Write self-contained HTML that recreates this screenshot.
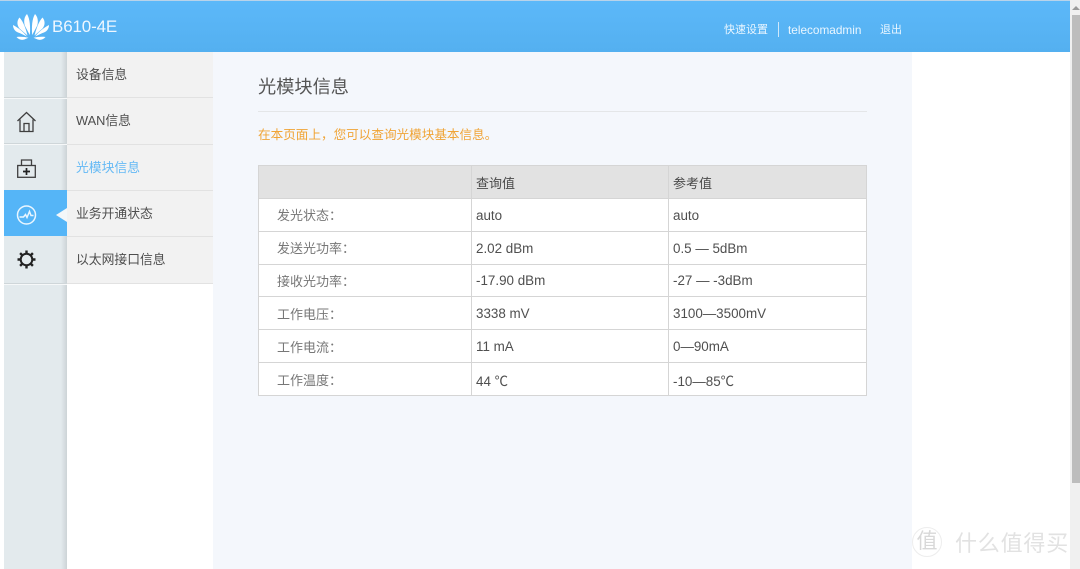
<!DOCTYPE html>
<html lang="zh">
<head>
<meta charset="utf-8">
<title>光模块信息</title>
<style>
html,body{margin:0;padding:0;width:1080px;height:569px;overflow:hidden;background:#fff;}
body{position:relative;font-family:"Liberation Sans","Noto Sans CJK SC",sans-serif;font-size:13px;color:#4a4a4a;}
.a{position:absolute;white-space:nowrap;}
.hdr{left:0;top:1px;width:1070px;height:51px;background:linear-gradient(#5cb8f9,#54b0f0);}
.top{left:0;top:0;width:1070px;height:1px;background:#b9d3ea;}
.hl{color:#eaf6ff;font-size:11px;line-height:16px;}
.side{left:4px;top:52px;width:63px;height:517px;background:#e3eaed;}
.shadow{left:61px;top:52px;width:6px;height:517px;background:linear-gradient(90deg,rgba(190,198,202,0),rgba(185,192,196,.55));}
.sl{left:4px;width:63px;height:1px;background:#cfd6d9;border-bottom:1px solid #f6f8f9;}
.sub{left:67px;top:52px;width:146px;height:231px;background:#f2f2f2;}
.sd{left:67px;width:146px;height:1px;background:#e2e2e2;}
.m{left:76px;font-size:12.8px;line-height:18px;color:#4d4d4d;}
.main{left:213px;top:52px;width:699px;height:517px;background:#f4f7fc;}
.title{left:258px;top:75px;font-size:18.200px;line-height:24px;color:#555;}
.rule{left:258px;top:111px;width:609px;height:1px;background:#e4e6e8;}
.tip{left:258px;top:126px;font-size:12.600px;line-height:18px;color:#f0a436;}
table{position:absolute;left:258px;top:165px;width:608px;height:231px;border-collapse:collapse;table-layout:fixed;background:#fff;font-size:13px;color:#4f4f4f;}
td,th{border:1px solid #d5d5d5;padding:1px 0 0 4px;height:32px;text-align:left;font-weight:normal;box-sizing:border-box;}
th{background:#e2e2e2;color:#4a4a4a;}
td.l{padding-left:18px;padding-top:0;color:#777;}
td.v{font-size:13.400px;}
.sb{left:1070px;top:0;width:10px;height:569px;background:#f0f0f0;}
.th{left:1072px;top:15px;width:8px;height:468px;background:#bdbdbd;}
.wm{left:955px;top:530px;font-size:22px;line-height:28px;color:#e2e2e2;letter-spacing:.8px;}
.wc{left:912px;top:527px;width:30px;height:30px;border-radius:50%;border:1px solid #ededed;box-sizing:border-box;font-size:21px;line-height:27px;text-align:center;color:#d8d8d8;}
</style>
</head>
<body>
<div class="a top"></div>
<div class="a hdr"></div>
<svg class="a" style="left:12px;top:13px" width="38" height="28" viewBox="0 0 38 28">
<g fill="#fff">
<path d="M15 1C12 4 11.500 9 13 13L17.800 22C18.500 14 18 6 15 1Z"/>
<path d="M23 1C26 4 26.500 9 25 13L20.200 22C19.500 14 20 6 23 1Z"/>
<path d="M7.500 4.500C4.500 8 5 12.500 7.500 15.500L15.500 22.500C13.500 15 11.500 9 7.500 4.500Z"/>
<path d="M30.500 4.500C33.500 8 33 12.500 30.500 15.500L22.500 22.500C24.500 15 26.500 9 30.500 4.500Z"/>
<path d="M1 12C1 16 3.500 19 7.500 20L15 23.500C11 18.500 6.500 15 1 12Z"/>
<path d="M37 12C37 16 34.500 19 30.500 20L23 23.500C27 18.500 31.500 15 37 12Z"/>
<path d="M4.500 24C7 27 10.500 27.500 13.500 26L16.500 24.800C12.500 23.800 8.500 23.500 4.500 24Z"/>
<path d="M33.500 24C31 27 27.500 27.500 24.500 26L21.500 24.800C25.500 23.800 29.500 23.500 33.500 24Z"/>
</g>
</svg>
<div class="a" style="left:52px;top:15px;font-size:17px;line-height:24px;color:#eef7ff;letter-spacing:-.15px;">B610-4E</div>
<div class="a hl" style="left:724px;top:22px">快速设置</div>
<div class="a" style="left:778px;top:22px;width:1px;height:15px;background:#cfe8fb"></div>
<div class="a hl" style="left:788px;top:22px;font-size:11.800px">telecomadmin</div>
<div class="a hl" style="left:880px;top:22px">退出</div>

<div class="a side"></div>
<div class="a shadow"></div>
<div class="a" style="left:4px;top:190px;width:63px;height:46px;background:#55b5f7"></div>
<div class="a sl" style="top:97px"></div>
<div class="a sl" style="top:143px"></div>
<div class="a sl" style="top:283px"></div>
<div class="a sub"></div>
<div class="a sd" style="top:97px"></div>
<div class="a sd" style="top:144px"></div>
<div class="a sd" style="top:190px"></div>
<div class="a sd" style="top:236px"></div>
<div class="a sd" style="top:283px"></div>
<div class="a" style="left:56px;top:208px;width:0;height:0;border-top:7px solid transparent;border-bottom:7px solid transparent;border-right:11px solid #f4f7f9"></div>

<svg class="a" style="left:16px;top:110px" width="22" height="24" viewBox="0 0 22 24" fill="none" stroke="#3f3f3f" stroke-width="1.300">
<path d="M1.500 11 10.500 2.500 19.500 11"/>
<path d="M4 9.500V21.500H17V9.500"/>
<path d="M8 21.500V13.500H13V21.500"/>
</svg>
<svg class="a" style="left:16px;top:158px" width="22" height="22" viewBox="0 0 22 22" fill="none" stroke="#3f3f3f" stroke-width="1.300">
<rect x="1.700" y="7.500" width="17.600" height="11.800"/>
<path d="M5.500 7.500V2H15.500V7.500"/>
<path d="M10.500 10V17M7 13.500H14" stroke-width="1.700" stroke="#222"/>
</svg>
<svg class="a" style="left:16px;top:204px" width="22" height="22" viewBox="0 0 22 22" fill="none" stroke="#eaf6ff" stroke-width="1.500">
<circle cx="10.500" cy="11" r="9"/>
<path d="M3.500 13H7.500L9.500 10.500 11 13.500 13.500 7.500 15 11.500H17.500" stroke-width="1.500"/>
</svg>
<svg class="a" style="left:16px;top:249px" width="22" height="22" viewBox="0 0 22 22" fill="none" stroke="#222" stroke-width="2">
<circle cx="10.500" cy="10.500" r="5.800"/>
<path d="M10.500 1.500V5M10.500 16V19.500M1.500 10.500H5M16 10.500H19.500M4.100 4.100 6.600 6.600M14.400 14.400 16.900 16.900M16.900 4.100 14.400 6.600M6.600 14.400 4.100 16.900" stroke-width="2.400"/>
</svg>

<div class="a m" style="top:66px">设备信息</div>
<div class="a m" style="top:112px">WAN信息</div>
<div class="a m" style="top:159px;color:#64b9f5">光模块信息</div>
<div class="a m" style="top:205px">业务开通状态</div>
<div class="a m" style="top:251px">以太网接口信息</div>

<div class="a main"></div>
<div class="a title">光模块信息</div>
<div class="a rule"></div>
<div class="a tip">在本页面上，您可以查询光模块基本信息。</div>
<table>
<colgroup><col style="width:213px"><col style="width:197px"><col style="width:198px"></colgroup>
<tr><th></th><th>查询值</th><th>参考值</th></tr>
<tr><td class="l">发光状态：</td><td class="v">auto</td><td class="v">auto</td></tr>
<tr><td class="l">发送光功率：</td><td class="v">2.02 dBm</td><td class="v">0.5 — 5dBm</td></tr>
<tr><td class="l">接收光功率：</td><td class="v">-17.90 dBm</td><td class="v">-27 — -3dBm</td></tr>
<tr><td class="l">工作电压：</td><td class="v">3338 mV</td><td class="v">3100—3500mV</td></tr>
<tr><td class="l">工作电流：</td><td class="v">11 mA</td><td class="v">0—90mA</td></tr>
<tr><td class="l">工作温度：</td><td class="v">44 ℃</td><td class="v">-10—85℃</td></tr>
</table>

<div class="a wc">值</div>
<div class="a wm">什么值得买</div>

<div class="a sb"></div>
<div class="a th"></div>
<div class="a" style="left:1072px;top:6px;width:0;height:0;border-left:4px solid transparent;border-right:4px solid transparent;border-bottom:4px solid #9a9a9a"></div>
</body>
</html>
